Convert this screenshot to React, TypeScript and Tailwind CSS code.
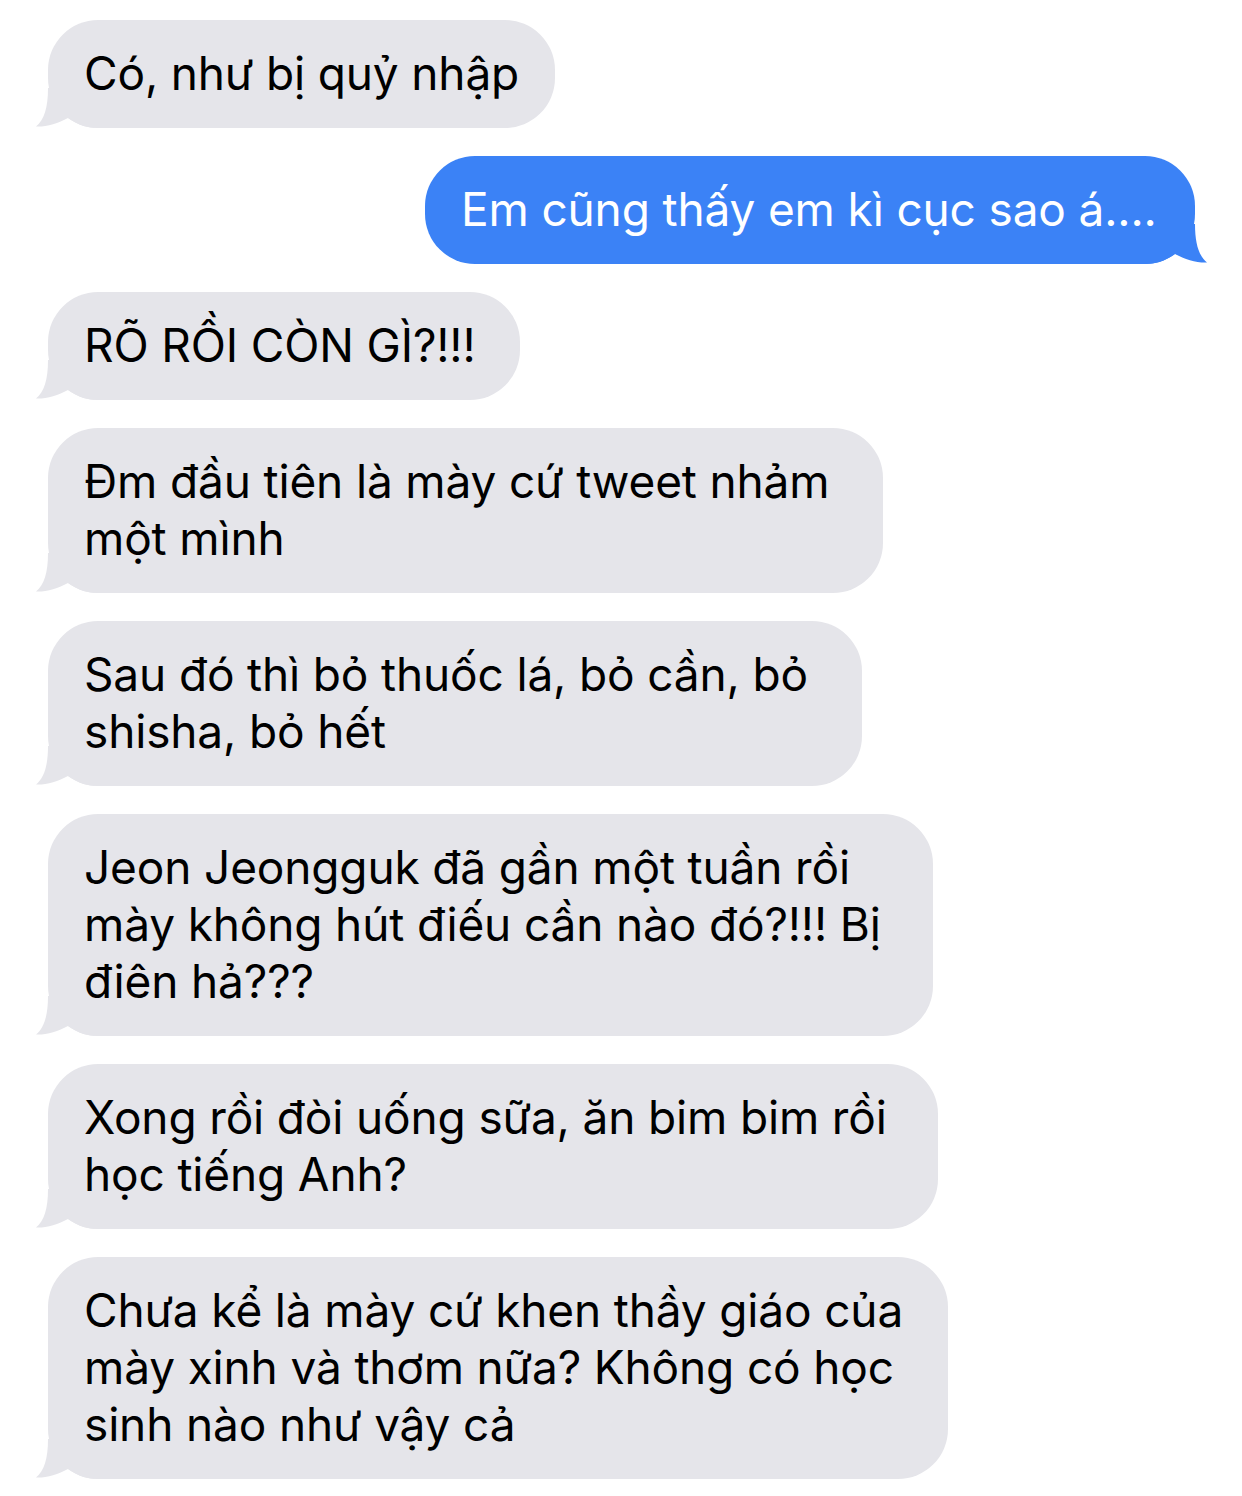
import React from "react";

type Msg = { lines: string[]; width: number; me?: boolean };

const messages: Msg[] = [
  { lines: ["Có, như bị quỷ nhập"], width: 507 },
  { lines: ["Em cũng thấy em kì cục sao á...."], width: 770, me: true },
  { lines: ["RÕ RỒI CÒN GÌ?!!!"], width: 472 },
  { lines: ["Đm đầu tiên là mày cứ tweet nhảm", "một mình"], width: 835 },
  { lines: ["Sau đó thì bỏ thuốc lá, bỏ cần, bỏ", "shisha, bỏ hết"], width: 814 },
  {
    lines: [
      "Jeon Jeongguk đã gần một tuần rồi",
      "mày không hút điếu cần nào đó?!!! Bị",
      "điên hả???",
    ],
    width: 885,
  },
  { lines: ["Xong rồi đòi uống sữa, ăn bim bim rồi", "học tiếng Anh?"], width: 890 },
  {
    lines: [
      "Chưa kể là mày cứ khen thầy giáo của",
      "mày xinh và thơm nữa? Không có học",
      "sinh nào như vậy cả",
    ],
    width: 900,
  },
];

function Tail({ me }: { me?: boolean }) {
  const fill = me ? "#3b82f6" : "#e5e5ea";
  return (
    <svg
      width="62"
      height="40"
      viewBox="0 0 62 40"
      className={
        me
          ? "absolute bottom-0 right-[-12px] -scale-x-100"
          : "absolute bottom-0 left-[-12px]"
      }
    >
      <path
        d="M12 0 C12 20 8 32 0 38.5 C10 39 22 35.5 32 30 C42 37 52 40 62 40 L62 0 Z"
        fill={fill}
      />
    </svg>
  );
}

function Bubble({ msg }: { msg: Msg }) {
  return (
    <div className={msg.me ? "flex justify-end pr-[47px]" : "flex pl-[48px]"}>
      <div
        style={{ width: msg.width }}
        className={
          msg.me
            ? "relative rounded-[50px] bg-[#3b82f6] pl-[36px] pt-[25px] pb-[26px] text-white"
            : "relative rounded-[50px] bg-[#e5e5ea] pl-[36px] pt-[25px] pb-[26px] text-black"
        }
      >
        <Tail me={msg.me} />
        <p className="relative whitespace-nowrap text-[46px] leading-[57px] tracking-[-0.15px]">
          {msg.lines.map((l, i) => (
            <React.Fragment key={i}>
              {i > 0 && <br />}
              {l}
            </React.Fragment>
          ))}
        </p>
      </div>
    </div>
  );
}

export default function App() {
  return (
    <div
      className="flex h-[1496px] w-[1242px] flex-col gap-[28px] overflow-hidden bg-white pt-[20px]"
      style={{ fontFamily: "Inter, 'Noto Sans', sans-serif" }}
    >
      {messages.map((m, i) => (
        <Bubble key={i} msg={m} />
      ))}
    </div>
  );
}
